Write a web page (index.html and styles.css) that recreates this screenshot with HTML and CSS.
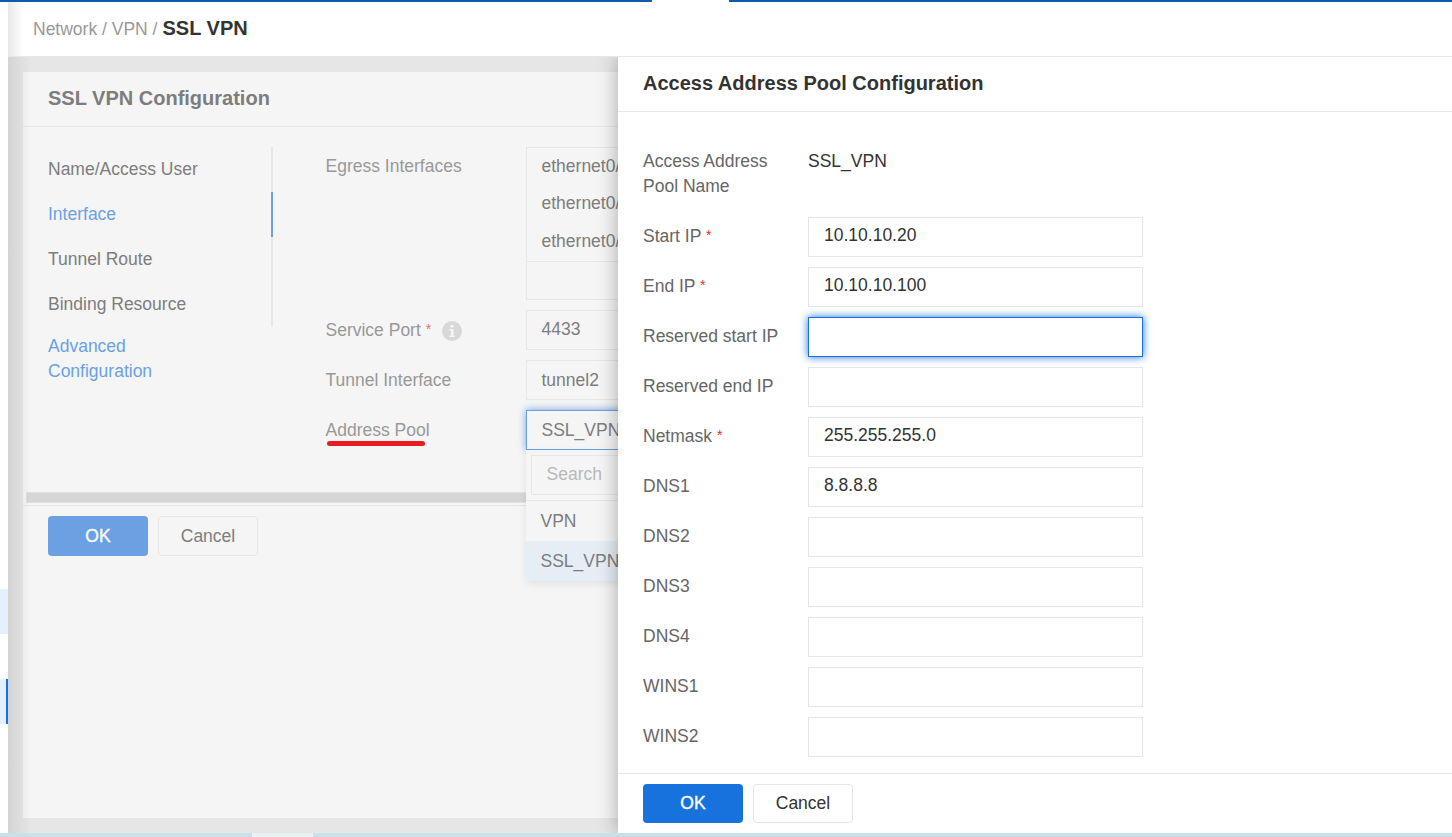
FILE: index.html
```html
<!DOCTYPE html>
<html lang="en">
<head>
<meta charset="utf-8">
<title>SSL VPN</title>
<link rel="stylesheet" href="styles.css">
</head>
<body>
<div class="topbar"><span class="topbar-tab"></span></div>
<div class="shell">
  <aside class="rail"><span class="rail-hover"></span><span class="rail-active"></span></aside>
  <main class="main">
    <header class="crumbs"><span class="crumb-path">Network / VPN /</span><span class="crumb-current">SSL VPN</span></header>
    <div class="workspace">
      <section class="card">
        <h2 class="title">SSL VPN Configuration</h2>
        <div class="card-body">
          <nav class="tabs">
            <div class="tab-list">
              <a class="tab">Name/Access User</a>
              <a class="tab tab-on">Interface</a>
              <a class="tab">Tunnel Route</a>
              <a class="tab">Binding Resource</a>
            </div>
            <a class="advanced">Advanced Configuration</a>
          </nav>
          <div class="form">
            <div class="row row-list">
              <div class="label">Egress Interfaces</div>
              <div class="listbox">
                <div class="options"><div>ethernet0/1</div><div>ethernet0/2</div><div>ethernet0/3</div></div>
              </div>
            </div>
            <div class="row">
              <div class="label">Service Port <span class="req">*</span>
                <svg class="info" viewBox="0 0 20 20"><circle cx="10" cy="10" r="10" fill="#d8d8d8"/><path d="M8.6 4h3v2.4h-3zM7.4 8h4.2v6.6h1.2v1.4H7.4v-1.4h1.4V9.4H7.4z" fill="#f5f5f5"/></svg>
              </div>
              <div class="box"><span class="up">4433</span></div>
            </div>
            <div class="row"><div class="label">Tunnel Interface</div><div class="box">tunnel2</div></div>
            <div class="row"><div class="label"><span class="marked">Address Pool</span></div>
              <div class="box box-focus">SSL_VPN
                <div class="menu">
                  <div class="search-wrap"><div class="search">Search</div></div>
                  <div class="item">VPN</div>
                  <div class="item item-on">SSL_VPN</div>
                </div>
              </div>
            </div>
          </div>
        </div>
        <div class="scroll"></div>
        <footer class="card-foot"><button class="btn btn-primary">OK</button><button class="btn">Cancel</button></footer>
      </section>
      <section class="drawer">
        <h2 class="title">Access Address Pool Configuration</h2>
        <div class="fields">
          <div class="field field-name"><div class="name">Access Address Pool Name</div><div class="value">SSL_VPN</div></div>
          <div class="field"><div class="name">Start IP <span class="req">*</span></div><div class="input">10.10.10.20</div></div>
          <div class="field"><div class="name">End IP <span class="req">*</span></div><div class="input">10.10.10.100</div></div>
          <div class="field"><div class="name">Reserved start IP</div><div class="input input-focus"></div></div>
          <div class="field"><div class="name">Reserved end IP</div><div class="input"></div></div>
          <div class="field"><div class="name">Netmask <span class="req">*</span></div><div class="input">255.255.255.0</div></div>
          <div class="field"><div class="name">DNS1</div><div class="input">8.8.8.8</div></div>
          <div class="field"><div class="name">DNS2</div><div class="input"></div></div>
          <div class="field"><div class="name">DNS3</div><div class="input"></div></div>
          <div class="field"><div class="name">DNS4</div><div class="input"></div></div>
          <div class="field"><div class="name">WINS1</div><div class="input"></div></div>
          <div class="field"><div class="name">WINS2</div><div class="input"></div></div>
        </div>
        <footer class="drawer-foot"><button class="btn btn-primary">OK</button><button class="btn">Cancel</button></footer>
      </section>
      <div class="edge-shade"></div>
    </div>
  </main>
</div>
<div class="taskbar"><span class="taskbar-item"></span></div>
</body>
</html>
```
FILE: styles.css
```css
* { box-sizing: border-box; }
body {
  margin: 0;
  height: 837px;
  display: flex;
  flex-direction: column;
  overflow: hidden;
  background: #fff;
  font: 17.5px/25px "Liberation Sans", Arial, sans-serif;
  color: #333;
}
.topbar { height: 2px; flex: none; background: #1259ab; display: flex; padding-left: 652px; }
.topbar-tab { width: 77px; background: #fff; }
.shell { flex: 1; min-height: 0; display: flex; }
.rail { width: 8px; flex: none; padding-top: 587px; display: flex; flex-direction: column; gap: 45px; }
.rail-hover, .rail-active { height: 45px; background: #e4f0fe; }
.rail-active { border-right: 2px solid #1772de; }
.main { position: relative; flex: 1; min-width: 0; display: flex; flex-direction: column; }
.crumbs {
  height: 55px;
  flex: none;
  display: flex;
  align-items: center;
  gap: 5px;
  padding: 0 0 2px 25px;
  border-bottom: 1px solid #e6e6e6;
}
.crumb-path { color: #999; padding-top: 2px; }
.crumb-current { font-size: 20px; font-weight: bold; }
.workspace { position: relative; flex: 1; min-height: 0; padding: 15px; background: #e6e6e6; overflow: hidden; }
.card { height: 100%; background: #f5f5f5; }
.title { margin: 0; height: 55px; padding: 0 25px 2px; border-bottom: 1px solid #e6e6e6; font-size: 20px; line-height: 52px; }
.card .title { color: #7d7d7d; }
.card-body { height: 365px; padding: 20px 0 0 25px; display: flex; }
.tabs { width: 225px; }
.tab-list { border-right: 2px solid #e6e6e6; }
.tab { display: block; height: 45px; line-height: 44px; color: #7d7d7d; }
.tab-on { color: #6ba1e3; border-right: 2px solid #6ba1e3; margin-right: -2px; }
.advanced { display: block; width: 120px; padding-top: 7px; color: #6ba1e3; }
.form { flex: 1; padding-left: 52.5px; display: flex; flex-direction: column; gap: 10px; color: #7d7d7d; }
.row { display: flex; height: 40px; }
.row-list { height: 153px; }
.label { width: 200.5px; flex: none; line-height: 41px; color: #999; display: flex; gap: 5px; }
.row-list .label { line-height: 39px; }
.req { color: #e22b2b; font-size: 14px; }
.card .req { color: #e87070; line-height: 39px; }
.info { width: 20px; height: 20px; margin: 11px 0 0 6px; }
.marked { height: 37px; position: relative; }
.marked::after { content: ""; position: absolute; left: 1px; bottom: 1px; width: 98px; height: 5px; border-radius: 3px; background: #e81c20; }
.listbox { flex: 1; border: 1px solid #e6e6e6; }
.options { height: 114px; border-bottom: 1px solid #e6e6e6; line-height: 37.4px; padding-left: 14.5px; }
.box { position: relative; flex: 1; border: 1px solid #e6e6e6; padding-left: 14.5px; line-height: 38px; }
.up { display: block; line-height: 36px; }
.box-focus { border-color: #6ba1e3; box-shadow: 0 0 8px #6ba1e3; }
.menu { position: absolute; left: -1px; right: -1px; top: 39px; background: #f5f5f5; box-shadow: 0 3px 8px rgba(0,0,0,.08); }
.search-wrap { height: 51px; padding: 5px 5px 5px; border-bottom: 1px solid #e6e6e6; }
.search { height: 40px; border: 1px solid #e6e6e6; padding-left: 14.5px; line-height: 37px; color: #b8b8b8; }
.item { height: 40px; line-height: 40px; padding-left: 14.5px; }
.item-on { background: #e5edf5; }
.scroll { height: 11px; margin: 0 3px; background: #d6d6d6; border: 1px solid #e0e0e0; }
.card-foot { margin-top: 2px; border-top: 1px solid #e6e6e6; padding: 10px 25px; display: flex; gap: 10px; }
.btn { width: 100px; height: 40px; border: 1px solid #e6e6e6; border-radius: 4px; background: transparent; font: inherit; color: inherit; padding: 0; }
.card .btn { color: #7d7d7d; }
.btn-primary, .card .btn-primary { border: 0; background: #1772de; color: #fff; -webkit-text-stroke: .4px #fff; }
.card .btn-primary { background: #6ba1e3; color: #f5f5f5; }
.drawer { position: absolute; left: 610px; top: 0; right: 0; bottom: 0; display: flex; flex-direction: column; background: #fff; box-shadow: 0 0 19px rgba(0,0,0,.32); }
.fields { flex: 1; padding: 37px 0 0 25px; display: flex; flex-direction: column; gap: 10px; }
.field { display: flex; height: 40px; }
.field-name { height: 58px; line-height: 25px; }
.name { width: 165px; flex: none; line-height: 39px; color: #666; }
.name .req { position: relative; top: -2px; }
.field-name .name { line-height: 25px; padding-right: 30px; }
.input { width: 335px; border: 1px solid #e6e6e6; padding-left: 15px; line-height: 35px; }
.input-focus { border-color: #1772de; box-shadow: 0 0 8px #1772de; }
.drawer-foot { height: 60px; flex: none; border-top: 1px solid #e6e6e6; padding: 10px 25px; display: flex; gap: 10px; }
.drawer-foot .btn { height: 39px; }
.edge-shade { position: absolute; left: 0; top: 0; bottom: 0; width: 24px; background: linear-gradient(90deg, rgba(0,0,0,.08), rgba(0,0,0,0)); }
.main::before { content: ""; position: absolute; left: 0; top: 0; width: 15px; height: 54px; background: linear-gradient(90deg, rgba(0,0,0,.09), rgba(0,0,0,0)); }
.taskbar { height: 4px; flex: none; background: #cbe0e6; display: flex; padding-left: 252px; }
.taskbar-item { width: 61px; background: #e8f2f5; }
```
